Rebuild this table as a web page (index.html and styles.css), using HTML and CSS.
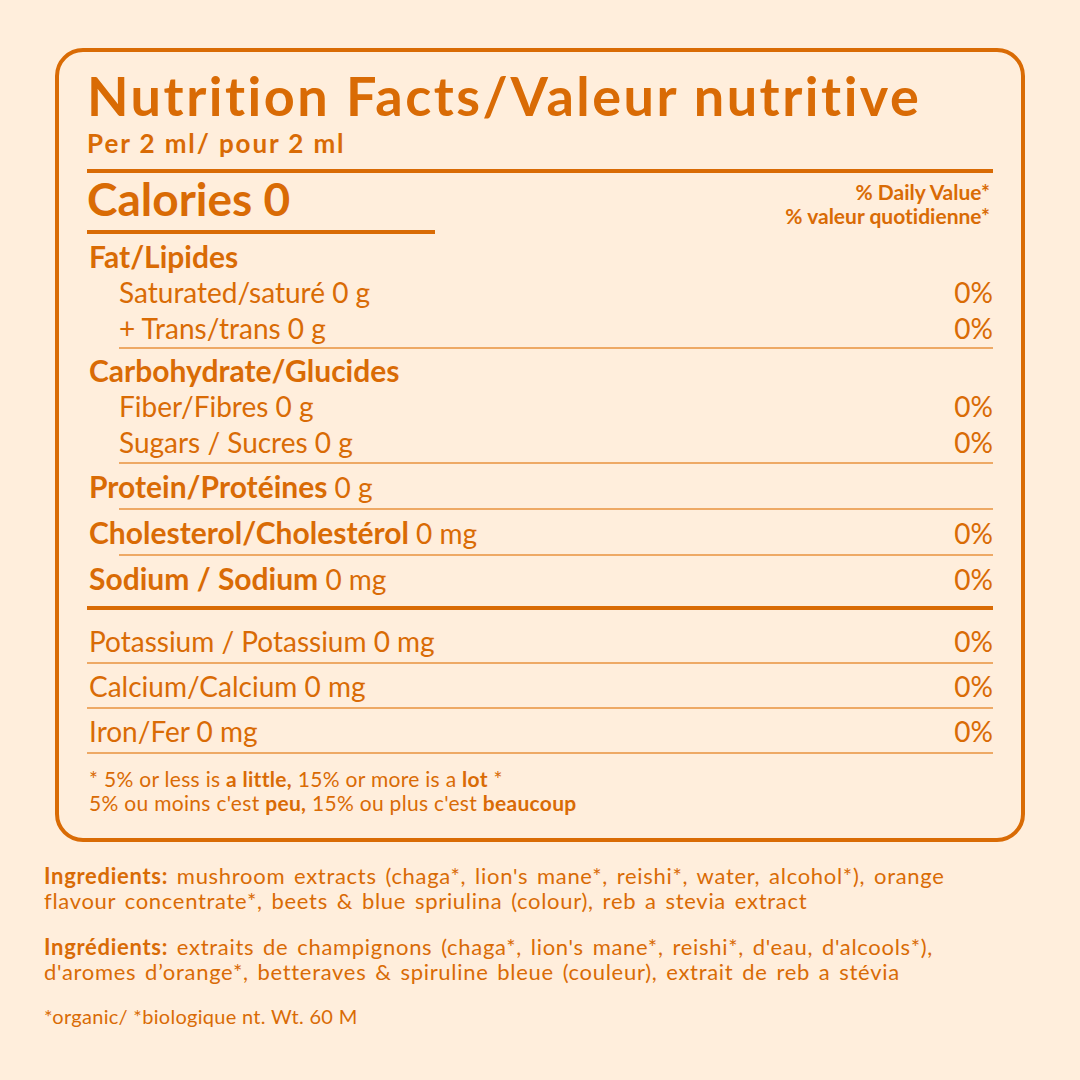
FILE: index.html
```html
<!DOCTYPE html>
<html lang="en">
<head>
<meta charset="utf-8">
<title>Nutrition Facts</title>
<link rel="stylesheet" href="styles.css">
</head>
<body>
<div class="page">
  <section class="label">
    <h1 class="title">Nutrition Facts/Valeur nutritive</h1>
    <div class="serving">Per 2 ml/ pour 2 ml</div>
    <div class="rule-thick"></div>
    <div class="cal-row">
      <div class="cal">Calories 0</div>
      <div class="dv">% Daily Value*<br>% valeur quotidienne*</div>
    </div>

    <div class="row"><span class="b">Fat/Lipides</span></div>
    <div class="row sub"><span>Saturated/saturé 0 g</span><span>0%</span></div>
    <div class="row sub"><span>+ Trans/trans 0 g</span><span>0%</span></div>
    <div class="rule indent r-a"></div>

    <div class="row"><span class="b">Carbohydrate/Glucides</span></div>
    <div class="row sub"><span>Fiber/Fibres 0 g</span><span>0%</span></div>
    <div class="row sub"><span>Sugars / Sucres 0 g</span><span>0%</span></div>
    <div class="rule indent r-b"></div>

    <div class="row"><span><span class="b">Protein/Protéines</span> 0 g</span></div>
    <div class="rule indent r-c"></div>

    <div class="row"><span><span class="b">Cholesterol/Cholestérol</span> 0 mg</span><span>0%</span></div>
    <div class="rule indent r-c"></div>

    <div class="row"><span><span class="b">Sodium / Sodium</span> 0 mg</span><span>0%</span></div>
    <div class="rule-thick mid"></div>

    <div class="row"><span>Potassium / Potassium 0 mg</span><span>0%</span></div>
    <div class="rule"></div>
    <div class="row"><span>Calcium/Calcium 0 mg</span><span>0%</span></div>
    <div class="rule"></div>
    <div class="row"><span>Iron/Fer 0 mg</span><span>0%</span></div>
    <div class="rule"></div>

    <p class="foot">* 5% or less is <b>a little,</b> 15% or more is a <b>lot</b> *<br>5% ou moins c'est <b>peu,</b> 15% ou plus c'est <b>beaucoup</b></p>
  </section>

  <section class="ingredients">
    <p><b>Ingredients:</b> mushroom extracts (chaga*, lion's mane*, reishi*, water, alcohol*), orange<br>flavour concentrate*, beets &amp; blue spriulina (colour), reb a stevia extract</p>
    <p><b>Ingrédients:</b> extraits de champignons (chaga*, lion's mane*, reishi*, d'eau, d'alcools*),<br>d'aromes d’orange*, betteraves &amp; spiruline bleue (couleur), extrait de reb a stévia</p>
    <p class="organic">*organic/ *biologique nt. Wt. 60 M</p>
  </section>
</div>
</body>
</html>
```

FILE: styles.css
```css
html, body {
  margin: 0;
  padding: 0;
  background: #FFEEDC;
}

body {
  width: 1080px;
  height: 1080px;
  overflow: hidden;
  color: #D96B05;
  font-family: "Lato", "Noto Sans", sans-serif;
  font-variant-ligatures: none;
}

.page {
  padding: 48px 0 0 44px;
}

.label {
  box-sizing: border-box;
  width: 970px;
  margin-left: 11px;
  border: 4px solid #D96B05;
  border-radius: 28px;
  padding: 11px 28px 24px 28px;
}

.title {
  margin: 0;
  font-size: 54px;
  line-height: 65px;
  font-weight: 700;
  letter-spacing: 2.5px;
  white-space: nowrap;
}

.serving {
  font-size: 26px;
  line-height: 31px;
  font-weight: 700;
  letter-spacing: 1.9px;
}

.rule-thick {
  height: 4px;
  background: #D96B05;
  margin-top: 10px;
}

.rule-thick.mid {
  margin: 10px 0 13px;
}

.cal-row {
  display: flex;
  justify-content: space-between;
  align-items: flex-start;
  margin-top: 2px;
}

.cal {
  width: 348px;
  font-size: 46px;
  line-height: 48px;
  font-weight: 700;
  padding-bottom: 7px;
  border-bottom: 4px solid #D96B05;
}

.dv {
  margin-top: 5px;
  padding-right: 3px;
  font-size: 21px;
  line-height: 24px;
  font-weight: 700;
  text-align: right;
}

.cal-row + .row {
  margin-top: 4px;
}

.row {
  display: flex;
  justify-content: space-between;
  align-items: baseline;
  height: 36px;
  font-size: 28px;
  line-height: 36px;
  padding-left: 2px;
}

.row.sub {
  padding-left: 32px;
}

.b {
  font-weight: 700;
  font-size: 30px;
}

.rule {
  height: 2px;
  background: #EEA965;
  margin: 3px 0 4px;
}

.rule.indent {
  margin-left: 32px;
}

.rule.r-a {
  margin-top: 1px;
  margin-bottom: 3px;
}

.rule.r-b {
  margin-top: 2px;
  margin-bottom: 4px;
}

.rule.r-c {
  margin-top: 4px;
  margin-bottom: 4px;
}

.foot {
  margin: 13px 0 0;
  padding-left: 2px;
  font-size: 21px;
  line-height: 23.5px;
  letter-spacing: 0.3px;
}

.ingredients {
  margin-top: 21px;
  font-size: 22px;
  line-height: 25px;
  letter-spacing: 0.7px;
  word-spacing: 2.5px;
}

.ingredients p {
  margin: 0 0 21px;
}

.ingredients .organic {
  margin-top: -1px;
  font-size: 20px;
  letter-spacing: 0.3px;
  word-spacing: 0;
}
```
